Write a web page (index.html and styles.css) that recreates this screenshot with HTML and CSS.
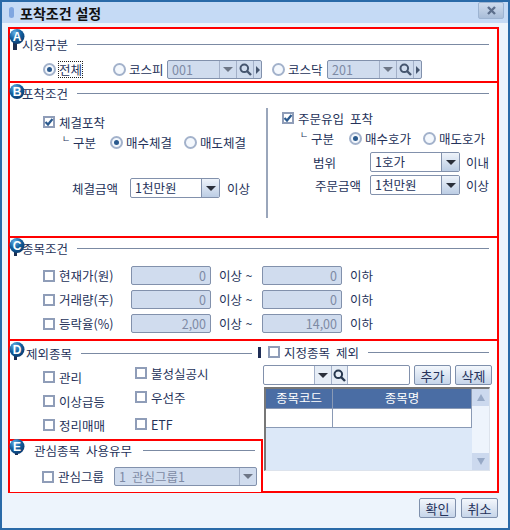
FILE: index.html
```html
<!DOCTYPE html>
<html lang="ko">
<head>
    <meta charset="UTF-8">
    <title>포착조건 설정</title>
    <link rel="stylesheet" href="styles.css">
</head>
<body>
    <div class="window">
        <div class="titlebar">
            <span class="title-pill"></span>
            <span class="title-text">포착조건 설정</span>
            <span class="close-btn">
                <svg width="11" height="11" viewBox="0 0 11 11"><path d="M2 2 L9 9 M9 2 L2 9" stroke="#5d6f8c" stroke-width="2.4"/></svg>
            </span>
        </div>

        <div class="frame">
            <!-- A -->
            <div class="section market">
                <svg class="badge" width="17" height="21" viewBox="0 0 17 21"><defs><radialGradient id="ball" cx="0.35" cy="0.25" r="0.85"><stop offset="0" stop-color="#62ade4"/><stop offset="0.5" stop-color="#13609f"/><stop offset="1" stop-color="#0a3568"/></radialGradient></defs><rect x="4" y="12" width="4" height="9" fill="#1c2f52"/><circle cx="8" cy="7.5" r="7.5" fill="url(#ball)"/><text x="8" y="12" text-anchor="middle" class="badge-letter">A</text></svg>
                <div class="legend">
                    <span class="legend-text">시장구분</span>
                    <span class="legend-line"></span>
                </div>
                <div class="market-row">
                    <label class="opt"><span class="radio on"></span><span class="focused">전체</span></label>
                    <label class="opt"><span class="radio"></span>코스피</label>
                    <div class="combo disabled market-combo">
                        <span class="combo-value">001</span>
                        <span class="combo-arrow"><i class="tri"></i></span>
                        <span class="combo-search"><svg width="13" height="13" viewBox="0 0 13 13"><circle cx="5.3" cy="5.3" r="3.8" fill="none" stroke="#46566f" stroke-width="2"/><path d="M8 8 L12 12" stroke="#46566f" stroke-width="2.4"/></svg></span>
                        <span class="combo-next"><i class="tri-right"></i></span>
                    </div>
                    <label class="opt"><span class="radio"></span>코스닥</label>
                    <div class="combo disabled market-combo">
                        <span class="combo-value">201</span>
                        <span class="combo-arrow"><i class="tri"></i></span>
                        <span class="combo-search"><svg width="13" height="13" viewBox="0 0 13 13"><circle cx="5.3" cy="5.3" r="3.8" fill="none" stroke="#46566f" stroke-width="2"/><path d="M8 8 L12 12" stroke="#46566f" stroke-width="2.4"/></svg></span>
                        <span class="combo-next"><i class="tri-right"></i></span>
                    </div>
                </div>
            </div>

            <!-- B -->
            <div class="section capture">
                <svg class="badge" width="17" height="21" viewBox="0 0 17 21"><circle cx="8" cy="7.5" r="7.5" fill="url(#ball)"/><text x="8" y="12" text-anchor="middle" class="badge-letter">B</text></svg>
                <div class="legend">
                    <span class="legend-text">포착조건</span>
                    <span class="legend-line"></span>
                </div>
                <div class="capture-body">
                    <div class="capture-left">
                        <label class="opt row-check"><span class="check on"><svg width="10" height="10" viewBox="0 0 10 10"><path d="M1.5 5 L4 7.5 L8.5 2" fill="none" stroke="#2b5a8e" stroke-width="2.2"/></svg></span>체결포착</label>
                        <div class="kind-row">
                            <span class="kind-label"><span class="corner">ㄴ</span>구분</span>
                            <label class="opt kind-opt"><span class="radio on"></span>매수체결</label>
                            <label class="opt"><span class="radio"></span>매도체결</label>
                        </div>
                        <div class="amount-row">
                            <span class="amount-label">체결금액</span>
                            <div class="combo select">
                                <span class="combo-value">1천만원</span>
                                <span class="select-btn"><i class="tri dark"></i></span>
                            </div>
                            <span class="unit">이상</span>
                        </div>
                    </div>
                    <div class="capture-divider"></div>
                    <div class="capture-right">
                        <label class="opt row-check"><span class="check on"><svg width="10" height="10" viewBox="0 0 10 10"><path d="M1.5 5 L4 7.5 L8.5 2" fill="none" stroke="#2b5a8e" stroke-width="2.2"/></svg></span>주문유입 포착</label>
                        <div class="kind-row">
                            <span class="kind-label"><span class="corner">ㄴ</span>구분</span>
                            <label class="opt kind-opt"><span class="radio on"></span>매수호가</label>
                            <label class="opt"><span class="radio"></span>매도호가</label>
                        </div>
                        <div class="order-row first">
                            <span class="order-label range">범위</span>
                            <div class="combo select">
                                <span class="combo-value">1호가</span>
                                <span class="select-btn"><i class="tri dark"></i></span>
                            </div>
                            <span class="unit">이내</span>
                        </div>
                        <div class="order-row">
                            <span class="order-label">주문금액</span>
                            <div class="combo select">
                                <span class="combo-value">1천만원</span>
                                <span class="select-btn"><i class="tri dark"></i></span>
                            </div>
                            <span class="unit">이상</span>
                        </div>
                    </div>
                </div>
            </div>

            <!-- C -->
            <div class="section stock">
                <svg class="badge" width="17" height="21" viewBox="0 0 17 21"><rect x="5" y="14" width="3" height="4" fill="#1c2f52"/><circle cx="8" cy="7.5" r="7.5" fill="url(#ball)"/><text x="8" y="12" text-anchor="middle" class="badge-letter">C</text></svg>
                <div class="legend">
                    <span class="legend-text">종목조건</span>
                    <span class="legend-line"></span>
                </div>
                <div class="stock-rows">
                    <div class="stock-row">
                        <label class="opt"><span class="check"></span>현재가(원)</label>
                        <span class="num-input">0</span>
                        <span class="unit">이상 ~</span>
                        <span class="num-input">0</span>
                        <span class="unit">이하</span>
                    </div>
                    <div class="stock-row">
                        <label class="opt"><span class="check"></span>거래량(주)</label>
                        <span class="num-input">0</span>
                        <span class="unit">이상 ~</span>
                        <span class="num-input">0</span>
                        <span class="unit">이하</span>
                    </div>
                    <div class="stock-row">
                        <label class="opt"><span class="check"></span>등락율(%)</label>
                        <span class="num-input">2,00</span>
                        <span class="unit">이상 ~</span>
                        <span class="num-input">14,00</span>
                        <span class="unit">이하</span>
                    </div>
                </div>
            </div>

            <div class="bottom">
                <div class="bottom-left">
                    <!-- D -->
                    <div class="except">
                        <svg class="badge" width="17" height="21" viewBox="0 0 17 21"><rect x="5" y="14" width="3" height="4" fill="#1c2f52"/><circle cx="8" cy="7.5" r="7.5" fill="url(#ball)"/><text x="8" y="12" text-anchor="middle" class="badge-letter">D</text></svg>
                        <div class="legend except-legend">
                            <span class="legend-text">제외종목</span>
                            <span class="legend-line"></span>
                        </div>
                        <div class="except-cols">
                            <div class="except-col one">
                                <label class="opt"><span class="check"></span>관리</label>
                                <label class="opt"><span class="check"></span>이상급등</label>
                                <label class="opt"><span class="check"></span>정리매매</label>
                            </div>
                            <div class="except-col two">
                                <label class="opt"><span class="check"></span>불성실공시</label>
                                <label class="opt"><span class="check"></span>우선주</label>
                                <label class="opt etf"><span class="check"></span>ETF</label>
                            </div>
                        </div>
                    </div>
                    <!-- E -->
                    <div class="watch">
                        <svg class="badge" width="17" height="21" viewBox="0 0 17 21"><rect x="6" y="13" width="3" height="3" fill="#1c2f52"/><circle cx="8" cy="7.5" r="7.5" fill="url(#ball)"/><text x="8" y="12" text-anchor="middle" class="badge-letter">E</text></svg>
                        <div class="legend watch-legend">
                            <span class="legend-text">관심종목 사용유무</span>
                            <span class="legend-line"></span>
                        </div>
                        <div class="watch-row">
                            <label class="opt"><span class="check"></span>관심그룹</label>
                            <div class="combo disabled watch-combo">
                                <span class="combo-value">1 관심그룹1</span>
                                <span class="combo-arrow"><i class="tri"></i></span>
                            </div>
                        </div>
                    </div>
                </div>

                <div class="bottom-right">
                    <div class="legend named-legend">
                        <span class="named-mark"></span>
                        <label class="opt"><span class="check"></span>지정종목 제외</label>
                        <span class="legend-line"></span>
                    </div>
                    <div class="named-tools">
                        <div class="combo named-combo">
                            <span class="named-code"></span>
                            <span class="combo-arrow"><i class="tri dark"></i></span>
                            <span class="combo-search"><svg width="13" height="13" viewBox="0 0 13 13"><circle cx="5.3" cy="5.3" r="3.8" fill="none" stroke="#28384f" stroke-width="2"/><path d="M8 8 L12 12" stroke="#28384f" stroke-width="2.4"/></svg></span>
                            <span class="named-name"></span>
                        </div>
                        <button class="btn" type="button">추가</button>
                        <button class="btn" type="button">삭제</button>
                    </div>
                    <div class="grid">
                        <div class="grid-main">
                            <div class="grid-head">
                                <span class="col-code">종목코드</span>
                                <span class="col-name">종목명</span>
                            </div>
                            <div class="grid-row">
                                <span class="col-code"></span>
                                <span class="col-name"></span>
                            </div>
                        </div>
                        <div class="scrollbar">
                            <span class="scroll-btn"><i class="tri-up"></i></span>
                            <span class="scroll-btn"><i class="tri-down"></i></span>
                        </div>
                    </div>
                </div>
            </div>
        </div>

        <div class="footer">
            <button class="btn" type="button">확인</button>
            <button class="btn" type="button">취소</button>
        </div>
    </div>
</body>
</html>
```

FILE: styles.css
```css
* {
    box-sizing: border-box;
}

body {
    margin: 0;
    font-family: "Noto Sans CJK KR", "Liberation Sans", sans-serif;
    font-size: 12.5px;
    word-spacing: 2.5px;
    color: #25325a;
}

.window {
    width: 510px;
    height: 530px;
    border: 2px solid #2a6aa8;
    background: #edf4fc;
    display: flex;
    flex-direction: column;
}

.titlebar {
    height: 21px;
    flex: none;
    background: #c5daf5;
    display: flex;
    align-items: center;
    padding-left: 7px;
}

.title-pill {
    width: 5px;
    height: 11px;
    border-radius: 3px;
    background: #7fa6e0;
    margin-right: 6px;
}

.title-text {
    font-weight: 700;
    color: #111;
    font-size: 14px;
    word-spacing: 0;
}

.close-btn {
    margin-left: auto;
    margin-right: 4px;
    margin-bottom: 4px;
    width: 26px;
    height: 17px;
    border: 1px solid #9db4d2;
    border-radius: 2px;
    background: linear-gradient(#cfdcee, #a9bdd8);
    display: flex;
    align-items: center;
    justify-content: center;
}

/* red frame round all the groups */
.frame {
    margin: 4px 0 0 6px;
    width: 491px;
    height: 466px;
    flex: none;
    border: 2px solid #ff0000;
    background: #fff;
}

.section {
    position: relative;
    border-bottom: 2px solid #ff0000;
}

.badge {
    position: absolute;
    left: -1px;
    top: 0;
}

.badge-letter {
    font-family: "Liberation Sans", sans-serif;
    font-weight: 700;
    font-size: 12px;
    fill: #fff;
}

.legend {
    display: flex;
    align-items: center;
    height: 20px;
    padding-left: 12px;
    padding-right: 8px;
}

.legend-line {
    flex: 1;
    height: 1px;
    background: #7b8aa3;
    margin-left: 9px;
}

.opt {
    display: flex;
    align-items: center;
    gap: 3px;
    white-space: nowrap;
}

.radio {
    width: 13px;
    height: 13px;
    flex: none;
    border: 2px solid #a3b2cb;
    border-radius: 50%;
    background: #f4f8fd;
    display: flex;
    align-items: center;
    justify-content: center;
}

.radio.on::after {
    content: "";
    width: 5px;
    height: 5px;
    border-radius: 50%;
    background: #2b5a8e;
}

.check {
    width: 12px;
    height: 12px;
    flex: none;
    border: 2px solid #8f9db8;
    background: #fff;
    margin-right: 1px;
    display: flex;
    align-items: center;
    justify-content: center;
}

.check svg {
    flex: none;
}

.focused {
    outline: 1px dotted #222;
    line-height: 15px;
}

.unit {
    white-space: nowrap;
    word-spacing: 0;
}

/* combos and selects */
.combo {
    display: flex;
    height: 19px;
    border: 1px solid #8291ac;
    border-radius: 2px;
    background: #fff;
    overflow: hidden;
}

.combo.disabled {
    background: #d0dcee;
    color: #7d8aa4;
}

.combo-value {
    flex: 1;
    padding-left: 4px;
    line-height: 17px;
    white-space: nowrap;
}

.combo-arrow,
.combo-search,
.combo-next {
    display: flex;
    align-items: center;
    justify-content: center;
    flex: none;
    border-left: 1px solid #a3b0c8;
}

.combo-arrow {
    width: 17px;
}

.combo-search {
    width: 17px;
}

.combo-next {
    width: 8px;
}

.tri {
    width: 0;
    height: 0;
    border-left: 5px solid transparent;
    border-right: 5px solid transparent;
    border-top: 5px solid #6d7686;
}

.tri.dark {
    border-top-color: #2a2f3a;
}

.tri-right {
    width: 0;
    height: 0;
    border-top: 4px solid transparent;
    border-bottom: 4px solid transparent;
    border-left: 4px solid #46566f;
}

.select {
    width: 90px;
    height: 20px;
}

.select-btn {
    width: 18px;
    flex: none;
    display: flex;
    align-items: center;
    justify-content: center;
    border-left: 1px solid #8291ac;
    background: linear-gradient(#eef3fa, #bccde4);
}

/* A */
.market {
    height: 54px;
    padding-top: 5px;
}

.market-row {
    display: grid;
    grid-template-columns: 70px 54px 105px 55px 96px;
    align-items: center;
    height: 19px;
    margin-top: 6px;
    padding-left: 33px;
}

.market-combo {
    width: 95px;
}

/* B */
.capture {
    height: 155px;
}

.capture .badge {
    top: 1px;
}

.capture-body {
    display: flex;
}

.capture-left {
    width: 256px;
    padding-top: 10px;
    padding-left: 33px;
}

.row-check {
    height: 18px;
}

.kind-row {
    display: flex;
    align-items: center;
    height: 18px;
    margin-top: 2px;
    padding-left: 19px;
}

.kind-label {
    width: 48px;
    white-space: nowrap;
    display: flex;
}

.corner {
    font-size: 9px;
    width: 11px;
    margin-top: -1px;
    line-height: 14px;
}

.kind-opt {
    width: 74px;
}

.amount-row {
    display: flex;
    align-items: center;
    margin-top: 27px;
    padding-left: 29px;
}

.amount-label {
    width: 58px;
}

.amount-row .unit {
    margin-left: 7px;
}

.capture-divider {
    width: 2px;
    height: 110px;
    margin-top: 5px;
    background: #9aa6bb;
}

.capture-right {
    padding-top: 6px;
    padding-left: 14px;
}

.capture-right .kind-row {
    margin-top: 2px;
    padding-left: 18px;
}

.capture-right .kind-label {
    width: 49px;
}

.order-row {
    display: flex;
    align-items: center;
    margin-top: 3px;
    padding-left: 33px;
}

.order-row.first {
    margin-top: 5px;
}

.order-label {
    width: 55px;
}

.order-label.range {
    margin-left: -2px;
    width: 57px;
}

.order-row .unit {
    margin-left: 6px;
}

/* C */
.stock {
    height: 103px;
}

.stock-rows {
    display: flex;
    flex-direction: column;
    gap: 5px;
    padding-top: 8px;
    padding-left: 33px;
}

.stock-row {
    display: grid;
    grid-template-columns: 88px 80px 51px 80px auto;
    align-items: center;
    height: 19px;
}

.stock-row .unit {
    padding-left: 8px;
}

.num-input {
    height: 19px;
    border: 1px solid #8291ac;
    border-radius: 2px;
    background: #d0dcee;
    color: #7d8aa4;
    text-align: right;
    padding-right: 4px;
    line-height: 17px;
}

/* D, E and the named list */
.bottom {
    display: flex;
}

.bottom-left {
    width: 253px;
    flex: none;
}

.except {
    position: relative;
    height: 97px;
}

.except-legend {
    margin-top: 1px;
    padding-left: 16px;
    padding-right: 11px;
    position: relative;
    top: 1px;
}

.except-cols {
    display: flex;
    padding-left: 33px;
}

.except-col {
    display: flex;
    flex-direction: column;
    gap: 6px;
}

.except-col label {
    height: 18px;
}

.except-col.one {
    width: 92px;
    padding-top: 6px;
}

.except-col.two {
    padding-top: 2px;
}

.except-col .etf {
    margin-top: 3px;
}

.watch {
    position: relative;
    height: 53px;
    border-top: 2px solid #ff0000;
    border-right: 2px solid #ff0000;
    background: #fff;
    z-index: 1;
}

.watch .badge {
    top: -2px;
}

.watch-legend {
    height: 18px;
    padding-left: 24px;
    padding-right: 6px;
}

.watch-legend .legend-line {
    margin-left: 11px;
}

.watch-row {
    display: flex;
    align-items: center;
    margin-top: 8px;
    padding-left: 32px;
}

.watch-row .opt {
    width: 72px;
}

.watch-combo {
    width: 143px;
}

.bottom-right {
    flex: none;
    width: 239px;
    margin-left: -5px;
}

.named-legend {
    margin-top: 1px;
    padding-left: 0;
    padding-right: 8px;
}

.named-mark {
    width: 3px;
    height: 11px;
    background: #1f2d55;
    margin-right: 7px;
}

.named-tools {
    display: flex;
    gap: 4px;
    margin-top: 3px;
    padding-left: 5px;
}

.named-combo {
    width: 147px;
    height: 20px;
}

.named-code {
    width: 50px;
    flex: none;
}

.named-combo .combo-arrow,
.named-combo .combo-search {
    background: #e6edf6;
}

.named-combo .combo-search {
    border-right: 1px solid #a3b0c8;
}

.btn {
    width: 37px;
    height: 20px;
    padding: 0;
    border: 1px solid #7f90ac;
    border-radius: 2px;
    background: linear-gradient(#f3f7fc, #c6d5e9);
    font-family: inherit;
    font-size: 13px;
    color: #25325a;
    line-height: 17px;
}

.grid {
    display: flex;
    width: 226px;
    height: 84px;
    margin: 2px 0 0 6px;
    border-top: 2px solid #777;
    border-left: 2px solid #777;
    border-right: 1px solid #dde3ec;
    border-bottom: 1px solid #dde3ec;
    background: #dce8f8;
}

.grid-main {
    flex: 1;
}

.grid-head,
.grid-row {
    display: flex;
}

.grid-head {
    height: 19px;
    background: #4a6da4;
    color: #fff;
    text-align: center;
}

.grid-head span {
    line-height: 18px;
}

.grid-row {
    height: 20px;
    background: #fff;
    border-top: 1px solid #8a9ab5;
    border-bottom: 1px solid #8a9ab5;
}

.col-code {
    width: 67px;
    flex: none;
    border-right: 1px solid #8a9ab5;
}

.col-name {
    flex: 1;
    border-right: 1px solid #8a9ab5;
}

.scrollbar {
    width: 17px;
    flex: none;
    background: #eef4fc;
    display: flex;
    flex-direction: column;
    justify-content: space-between;
}

.scroll-btn {
    height: 17px;
    background: #ccd9ee;
    display: flex;
    align-items: center;
    justify-content: center;
}

.tri-up,
.tri-down {
    width: 0;
    height: 0;
    border-left: 4px solid transparent;
    border-right: 4px solid transparent;
}

.tri-up {
    border-bottom: 7px solid #97a9c6;
}

.tri-down {
    border-top: 7px solid #97a9c6;
}

.footer {
    display: flex;
    justify-content: flex-end;
    gap: 5px;
    margin-top: 5px;
    padding-right: 10px;
}
```
